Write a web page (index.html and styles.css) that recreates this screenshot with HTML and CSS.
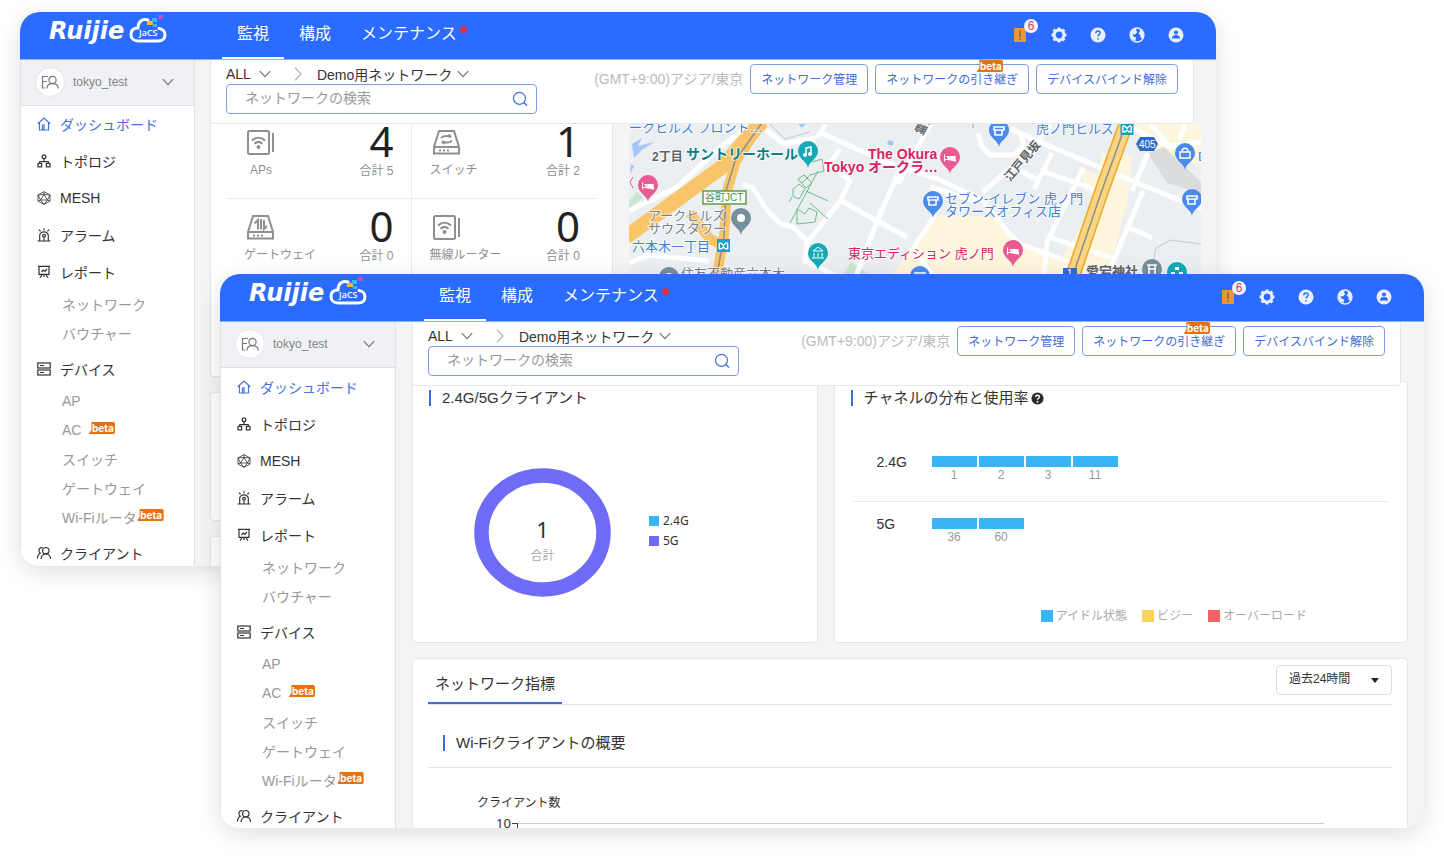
FILE: index.html
```html
<!DOCTYPE html>
<html lang="ja">
<head>
<meta charset="utf-8">
<meta name="viewport" content="width=device-width, initial-scale=1">
<title>Ruijie JaCS</title>
<link rel="stylesheet" href="styles.css">
</head>
<body>

<svg class="defs" aria-hidden="true">
  <symbol id="logo" viewBox="0 0 122 36" overflow="visible">
    <text class="logo-word" x="0" y="27">Ruijie</text>
    <path d="M99 8c-6-2-10 2-10 8-5 0-7 3-7 6.500 0 4 3 6.500 7 6.500h20c5 0 7-3 7-6s-2-6-6-6.500" fill="none" stroke="#fff" stroke-width="3" stroke-linecap="round"/>
    <path fill="#f3b73b" d="M98 9h6v4h-6z"/>
    <path fill="#35b9f1" d="M103 6h5v4h-5zM104 12h4v3h-4z"/>
    <path fill="#b552c8" d="M109 3h5v4h-5z"/>
    <text class="logo-tag" x="90" y="24">JaCS</text>
  </symbol>
  <symbol id="i-alert" viewBox="0 0 16 16">
    <path fill="#e8963c" d="M2 1h12v14H2z"/><path fill="#8d5b2a" d="M7.400 3.500h1.400v6.500H7.400zM7.400 11.300h1.400v1.400H7.400z"/>
  </symbol>
  <symbol id="i-gear" viewBox="0 0 16 16">
    <g fill="none" stroke="#e9f0ff"><circle cx="8" cy="8" r="4.900" stroke-width="3"/><path d="M8 .6v3M8 12.400v3M.6 8h3M12.400 8h3M2.600 2.600l2.200 2.200M11.200 11.200l2.200 2.200M13.400 2.600l-2.200 2.200M4.800 11.200l-2.200 2.200" stroke-width="3"/></g>
  </symbol>
  <symbol id="i-help" viewBox="0 0 16 16">
    <circle cx="8" cy="8" r="7.500" fill="#e9f0ff"/>
    <path d="M5.800 6.300c0-1.500 1-2.300 2.200-2.300s2.200.8 2.200 2c0 1.600-2.200 1.700-2.200 3.600" fill="none" stroke="#2c6bff" stroke-width="1.400"/><circle cx="8" cy="11.800" r=".9" fill="#2c6bff"/>
  </symbol>
  <symbol id="i-globe" viewBox="0 0 16 16">
    <circle cx="8" cy="8" r="7" fill="none" stroke="#e9f0ff" stroke-width="1.300"/>
    <path fill="#e9f0ff" d="M1.500 5 5 2l3-.8L7 3.500 8.300 5 6 7.500 3.500 7l1 2.500L7 10.500 6.500 14 3 12.500 1.200 9zM10.500 2l3 2 1.500 4-1.500 4-2-1.500L11.500 8 9.500 6.500 11 4.500z"/>
  </symbol>
  <symbol id="i-user" viewBox="0 0 16 16">
    <circle cx="8" cy="8" r="7.500" fill="#e9f0ff"/><circle cx="8" cy="5.600" r="2" fill="#2c6bff"/><path fill="#2c6bff" d="M4 11.500c0-2.500 1.500-3.500 4-3.500s4 1 4 3.500z"/>
  </symbol>
  <symbol id="i-chevron" viewBox="0 0 12 8">
    <path d="M.8 1.200 6 6.700l5.200-5.500" fill="none" stroke="currentColor" stroke-width="1.200"/>
  </symbol>
  <symbol id="i-sep" viewBox="0 0 8 14">
    <path d="M1 .8 7 7l-6 6.200" fill="none" stroke="currentColor" stroke-width="1.300"/>
  </symbol>
  <symbol id="i-search" viewBox="0 0 16 16">
    <circle cx="7.500" cy="7.300" r="6" fill="none" stroke="currentColor" stroke-width="1.200"/><path d="m12 11.500 3 3" stroke="currentColor" stroke-width="1.500"/>
  </symbol>
  <symbol id="i-avatar" viewBox="0 0 18 14">
    <g fill="none" stroke="#777" stroke-width="1.200"><path d="M7 1.500H1.500V13H4M1.500 6.500H6"/><circle cx="11.500" cy="5" r="3.600"/><path d="M6 13.500c0-3 2-4.800 5.500-4.800s5.700 1.800 5.700 4.800"/></g>
  </symbol>
  <symbol id="i-home" viewBox="0 0 14 14">
    <path d="M2.500 6v7h9V6M.8 6.800 7 1l6.200 5.800M5.500 13V7.500M7 13V7" fill="none" stroke="currentColor" stroke-width="1.200"/>
  </symbol>
  <symbol id="i-topology" viewBox="0 0 14 14">
    <g fill="none" stroke="currentColor" stroke-width="1.200"><circle cx="7" cy="2.800" r="1.900"/><path d="M7 4.700v3M2.700 9.500V7.700h8.600v1.800"/><rect x="1" y="9.500" width="3.600" height="3.400"/><rect x="9.400" y="9.500" width="3.600" height="3.400"/></g>
  </symbol>
  <symbol id="i-mesh" viewBox="0 0 14 14">
    <g fill="none" stroke="currentColor" stroke-width=".8"><path d="m7 .7 6 3.200v6.200l-6 3.200-6-3.200V3.900z"/><path d="m7 3.500 3.500 5.500h-7zM7 .7v2.800M1 3.900l2.500 5.100M13 3.900 10.500 9M1 10.100 3.500 9M13 10.100 10.500 9M7 13.300 3.500 9M7 13.300 10.500 9M1 3.900l6-.4 6 .4"/></g>
  </symbol>
  <symbol id="i-alarm" viewBox="0 0 14 14">
    <g fill="none" stroke="currentColor" stroke-width="1.200"><path d="M.5 13h13M2.700 13V7.500a4.300 3.600 0 0 1 8.600 0V13M7 .3v2M2 1.800l1.600 1.400M12 1.800l-1.600 1.400M7 13V9.500"/><circle cx="7" cy="7.800" r="1.400"/></g>
  </symbol>
  <symbol id="i-report" viewBox="0 0 14 14">
    <g fill="none" stroke="currentColor" stroke-width="1.200"><path d="M1 1.300h12M2 1.300v8h10v-8M4.500 7 6.300 5l1.500 1.300L10 4M5 9.500l-1.800 3.300M9 9.500l1.800 3.300M7 9.500V12"/></g>
  </symbol>
  <symbol id="i-device" viewBox="0 0 14 14">
    <g fill="none" stroke="currentColor" stroke-width="1.200"><rect x=".8" y="1" width="12.400" height="5"/><rect x=".8" y="8" width="12.400" height="5"/><path d="M3 3.500h4M3 10.500h4"/></g>
  </symbol>
  <symbol id="i-client" viewBox="0 0 14 14">
    <g fill="none" stroke="currentColor" stroke-width="1.200"><circle cx="8.800" cy="4.700" r="3.200"/><path d="M4 13c.3-3.300 2-5 4.800-5s4.500 1.700 4.800 5M5.500 1.700C3 1.200 1.700 3 2 5c.2 1 .7 1.700 1.300 2.200C1.500 8 .6 10 .4 12.500"/></g>
  </symbol>
  <symbol id="i-ap" viewBox="0 0 28 28">
    <g fill="none" stroke="#8f8f8f" stroke-width="2"><rect x="1" y="2" width="21" height="23" rx="1.500"/><path d="M26 4v19"/><path d="M5 11.500c4-3.800 9-3.800 13 0M7.500 14.800c2.500-2.400 5.500-2.400 8 0"/></g><circle cx="11.500" cy="18" r="2" fill="#8f8f8f"/>
  </symbol>
  <symbol id="i-switch" viewBox="0 0 28 28">
    <g fill="none" stroke="#8f8f8f" stroke-width="2"><path d="M6 2h15l5 16v6.500H1V18zM1 18h25"/><path d="M8 9c2-2.500 6-2.500 10-1l-2.500-2.500M19 11.500c-2 2.500-6 2.500-10 1l2.500 2.500"/></g><path d="M6 21.500h10" stroke="#8f8f8f" stroke-width="2" stroke-dasharray="2 2"/>
  </symbol>
  <symbol id="i-gateway" viewBox="0 0 28 28">
    <g fill="none" stroke="#8f8f8f" stroke-width="2"><path d="M6 2h15l5 16v6.500H1V18zM1 18h25"/><path d="M7.500 9.500 11 6v9.500M14 5v10.500M17 6v9l3-3"/></g><path d="M6 21.500h10" stroke="#8f8f8f" stroke-width="2" stroke-dasharray="2 2"/>
  </symbol>
  <symbol id="pin" viewBox="-10 -10 20 28" overflow="visible">
    <path d="M0 17C-1 10-10 8-10 0A10 10 0 1 1 10 0C10 8 1 10 0 17z" fill="currentColor"/>
  </symbol>
  <symbol id="g-shop" viewBox="-6 -6 12 12"><path d="M-5-4H5V-1H-5zM-4-1V4H3V-1" fill="none" stroke="#fff" stroke-width="1.600"/></symbol>
  <symbol id="g-bed" viewBox="-6 -6 12 12"><path d="M-5.500-3.500v7M-5.500 1.500h11v2M-3.500-1.500h2V1.500M0-1.500h5V1.500H0z" fill="#fff" stroke="#fff" stroke-width="1.200"/></symbol>
  <symbol id="metro" viewBox="0 0 14 14"><path fill="#17a2c8" d="M0 0h14v14H0z"/><path d="M2.500 10.500V5.500C2.500 3 5.500 4.500 7 7c1.500-2.500 4.500-4 4.500-1.500v5H9L7 8.500 5 10.500z" fill="none" stroke="#fff" stroke-width="1.500"/></symbol>
</svg>

<main class="stage">

  <section class="window window-back" aria-label="ネットワーク監視">
    <header class="topbar">
      <svg class="logo" role="img" aria-label="Ruijie JaCS"><use href="#logo"/></svg>
      <nav class="tabs">
        <a class="tab is-active" href="#">監視</a>
        <a class="tab" href="#">構成</a>
        <a class="tab has-dot" href="#">メンテナンス</a>
      </nav>
      <div class="tools">
        <button class="tool" aria-label="アラート"><svg><use href="#i-alert"/></svg><span class="count">6</span></button>
        <button class="tool" aria-label="設定"><svg><use href="#i-gear"/></svg></button>
        <button class="tool" aria-label="ヘルプ"><svg><use href="#i-help"/></svg></button>
        <button class="tool" aria-label="言語"><svg><use href="#i-globe"/></svg></button>
        <button class="tool" aria-label="ユーザー"><svg><use href="#i-user"/></svg></button>
      </div>
    </header>
    <div class="body">
      <aside class="sidebar">
        <button class="account"><span class="avatar"><svg><use href="#i-avatar"/></svg></span><span class="account-name">tokyo_test</span><svg class="chevron"><use href="#i-chevron"/></svg></button>
        <nav class="menu">
          <a class="item is-active" href="#"><svg><use href="#i-home"/></svg>ダッシュボード</a>
          <a class="item" href="#"><svg><use href="#i-topology"/></svg>トポロジ</a>
          <a class="item" href="#"><svg><use href="#i-mesh"/></svg>MESH</a>
          <a class="item" href="#"><svg><use href="#i-alarm"/></svg>アラーム</a>
          <a class="item" href="#"><svg><use href="#i-report"/></svg>レポート</a>
          <div class="submenu">
            <a href="#">ネットワーク</a>
            <a href="#">バウチャー</a>
          </div>
          <a class="item" href="#"><svg><use href="#i-device"/></svg>デバイス</a>
          <div class="submenu">
            <a href="#">AP</a>
            <a class="spaced" href="#">AC<span class="beta">beta</span></a>
            <a href="#">スイッチ</a>
            <a href="#">ゲートウェイ</a>
            <a href="#">Wi-Fiルータ<span class="beta">beta</span></a>
          </div>
          <a class="item" href="#"><svg><use href="#i-client"/></svg>クライアント</a>
        </nav>
      </aside>
      <div class="content">
        <div class="subheader">
          <div class="finder">
            <div class="crumbs">
              <button class="crumb">ALL<svg class="chevron"><use href="#i-chevron"/></svg></button>
              <svg class="sep"><use href="#i-sep"/></svg>
              <button class="crumb crumb-long">Demo用ネットワーク<svg class="chevron"><use href="#i-chevron"/></svg></button>
            </div>
            <label class="search"><input type="text" placeholder="ネットワークの検索" aria-label="ネットワークの検索"><svg><use href="#i-search"/></svg></label>
          </div>
          <div class="actions">
            <span class="zone">(GMT+9:00)アジア/東京</span>
            <button class="btn">ネットワーク管理</button>
            <button class="btn">ネットワークの引き継ぎ<span class="beta">beta</span></button>
            <button class="btn">デバイスバインド解除</button>
          </div>
        </div>
        <div class="overview">
          <div class="stats">
            <div class="stat"><div class="kind"><svg><use href="#i-ap"/></svg><span class="center">APs</span></div><div class="value"><strong>4</strong><span>合計 5</span></div></div>
            <div class="stat"><div class="kind"><svg><use href="#i-switch"/></svg><span>スイッチ</span></div><div class="value"><strong>1</strong><span>合計 2</span></div></div>
            <div class="stat"><div class="kind"><svg><use href="#i-gateway"/></svg><span>ゲートウェイ</span></div><div class="value"><strong>0</strong><span>合計 0</span></div></div>
            <div class="stat"><div class="kind"><svg><use href="#i-ap"/></svg><span>無線ルーター</span></div><div class="value"><strong>0</strong><span>合計 0</span></div></div>
          </div>
          <svg class="map" viewBox="629 123 572 253" preserveAspectRatio="xMidYMin slice" role="img" aria-label="地図">
            <path fill="#eceff1" d="M629 123h572v253H629z"/>
            <path fill="#fef6dc" d="M935 214l60 2 28 32 40 8 25-42 14-62 30 2-4 44-26 98H905l-14-20zM1130 123h71v40l-40-4-18-20zM1083 168l22 8-8 20-14-8z"/>
            <path fill="#dadcde" d="M1148 152l16-6 37 35v11l-34-10z"/>
            <path fill="#c9e7cf" d="M629 200l8-9 6 6-14 10zM843 275l8-14 20 14z"/>
            <path fill="#a5c5f7" d="M632 143l10-6-4 8 16-4-12 8-8 8zM798 123h8l-4 4zM889 139l5 2-2 4-5-2zM631 163l3 2-4 8z"/>
            <g class="road">
              <path d="M629 210l48-24 44-40 30-23M743 183l10 4 14 22 14 14 12 3 14 14-2 20 38 18M766 129l18 14 32-6M817 137l9-14M820 131l60 28 60 20 42 20 26 32 12 12 55 20M826 160l24 20-10 20-33 42M840 199l37 21 30 16M900 168l-22 50-22 57M840 148l-14 20M930 123l-32 60M978 132l4 14 8 8h24l10-10-4-12M1011 128l50 22 52 22 88 36M1050 123l-17 24-50 44M1052 152l-18 36M1042 170l58 20M1083 167l-36 74-3 34M1143 190l-32 76M1130 227l22 10M1052 237l60 20M1148 152l-16 38M935 214l-22 34 20 27M975 200l-44-14M1020 170l16 8M1150 123l20 22 31-4M1185 123l-6 16M1130 126l40 20M629 262l20-8 60 6"/>
            </g>
            <g class="expressway">
              <path d="M626 236l96-70 40-46"/>
              <path class="thin" d="M764 118l-28 42-9 30-3 45-8 44"/>
              <path class="thin" d="M690 212l20 26 12 6"/>
            </g>
            <path d="M761 123l-26 37-9 30-2 45-8 44" fill="none" stroke="#8d8d8d" stroke-width="1.500"/>
            <path d="M1127 120l-26 72-30 88" fill="none" stroke="#e9aa27" stroke-width="15"/>
            <path d="M1127 120l-26 72-30 88" fill="none" stroke="#fbd581" stroke-width="12"/>
            <path d="M1127 120l-26 72-30 88" fill="none" stroke="#8d8d8d" stroke-width="1.500"/>
            <g fill="none" stroke="#6dbd85" stroke-width="1"><path d="M812 161l10-3 2 12-14 4-8 8M798 178l6-4 8 8-6 5zM793 188l6-5 6 5-6 10-6-3zM818 170l-28 52M797 208l8 5 4-6 8 4-2 10-18 2zM810 202l18 16M792 196l-3 5M806 190l22 10M973 123v4"/></g>
            <g fill="none" stroke="#c4c9cd"><path d="M770 123l15 15 25-7M1150 275l6-28 14-8 31 4"/></g>
            <g class="lbl blue"><text x="629" y="131">ークヒルズ フロント…</text><text x="632" y="250">六本木一丁目</text><text x="945" y="202">セブン-イレブン 虎ノ門</text><text x="945" y="215">タワーズオフィス店</text><text x="1036" y="132">虎ノ門ヒルズ</text><text x="1198" y="160">D</text></g>
            <g class="lbl slate"><text x="648" y="219">アークヒルズ</text><text x="648" y="232">サウスタワー</text><text x="681" y="277">住友不動産六本木</text></g>
            <g class="lbl strong"><text class="teal" x="686" y="158">サントリーホール</text><text class="rose" x="868" y="158">The Okura</text><text class="rose" x="824" y="171">Tokyo オークラ…</text></g>
            <g class="lbl"><text class="rose" x="848" y="257">東京エディション 虎ノ門</text><text class="stone bold" x="1086" y="275">愛宕神社</text></g>
            <g class="lbl small stone"><text class="bold" x="652" y="160">2丁目</text><text class="bold" transform="translate(1010 181) rotate(-50)">江戸見坂</text><text class="bold" transform="translate(922 135) rotate(-60)">霊南坂</text></g>
            <rect x="703" y="190" width="43" height="13" fill="#fff" stroke="#5f9e46" stroke-width="1.500"/>
            <g class="lbl tiny"><text class="green" x="705" y="200">谷町JCT</text></g>
            <path fill="#2f6dc9" d="M1140 136h14l4 7-4 7h-14l-4-7zM1063 267h14v9h-14z"/>
            <g class="lbl tiny"><text class="white" x="1139" y="147">405</text><text class="white" x="1067" y="276">1</text></g>
            <use href="#metro" x="717" y="238" width="13" height="13"/><use href="#metro" x="1120" y="121" width="14" height="13"/>
            <g color="#ea5b93"><use href="#pin" x="638" y="174" width="20" height="28"/><use href="#pin" x="940" y="146" width="20" height="28"/><use href="#pin" x="1003" y="239" width="20" height="28"/></g>
            <g color="#4b8bf0"><use href="#pin" x="989" y="119" width="20" height="28"/><use href="#pin" x="923" y="190" width="20" height="28"/><use href="#pin" x="1175" y="142" width="20" height="28"/><use href="#pin" x="1182" y="188" width="20" height="28"/><use href="#pin" x="910" y="265" width="20" height="28"/></g>
            <g color="#16a9b5"><use href="#pin" x="798" y="140" width="20" height="28"/><use href="#pin" x="808" y="242" width="20" height="28"/><use href="#pin" x="1167" y="261" width="20" height="28"/></g>
            <g color="#78909c"><use href="#pin" x="731" y="207" width="20" height="28"/><use href="#pin" x="659" y="266" width="20" height="28"/><use href="#pin" x="1142" y="258" width="20" height="28"/></g>
            <use href="#g-bed" x="642" y="179" width="12" height="12"/><use href="#g-bed" x="944" y="151" width="12" height="12"/><use href="#g-bed" x="1007" y="244" width="12" height="12"/>
            <use href="#g-shop" x="993" y="124" width="12" height="12"/><use href="#g-shop" x="927" y="194" width="12" height="12"/><use href="#g-shop" x="1186" y="193" width="12" height="12"/><use href="#g-shop" x="914" y="270" width="12" height="12"/>
            <circle cx="741" cy="217" r="4" fill="#fff"/><circle cx="669" cy="276" r="4" fill="#fff"/>
            <path d="M806 154v-7l5-1v7" fill="none" stroke="#fff" stroke-width="1.500"/><circle cx="805" cy="154" r="2" fill="#fff"/><circle cx="810" cy="153" r="2" fill="#fff"/>
            <path d="M813 250l5-4 5 4zM814 252v4M818 252v4M822 252v4M812 257h12" fill="none" stroke="#fff"/>
            <path d="M1180 151h10v6h-10zM1182 151c0-5 6-5 6 0" fill="none" stroke="#fff" stroke-width="1.500"/>
            <path d="M1147 264h10M1148 268h8M1149 264v9M1155 264v9" stroke="#fff" stroke-width="1.500"/>
            <path d="M1175 266h4v3h-4zM1171 271h4v3h-4zM1179 271h4v3h-4z" fill="#fff"/>
            <path d="M633 176l-3 5 3 6" fill="none" stroke="#ea5b93"/>
          </svg>
        </div>
        <div class="card blank"></div>
        <div class="card blank"></div>
      </div>
    </div>
  </section>

  <section class="window window-front" aria-label="クライアント概要">
    <header class="topbar">
      <svg class="logo" role="img" aria-label="Ruijie JaCS"><use href="#logo"/></svg>
      <nav class="tabs">
        <a class="tab is-active" href="#">監視</a>
        <a class="tab" href="#">構成</a>
        <a class="tab has-dot" href="#">メンテナンス</a>
      </nav>
      <div class="tools">
        <button class="tool" aria-label="アラート"><svg><use href="#i-alert"/></svg><span class="count">6</span></button>
        <button class="tool" aria-label="設定"><svg><use href="#i-gear"/></svg></button>
        <button class="tool" aria-label="ヘルプ"><svg><use href="#i-help"/></svg></button>
        <button class="tool" aria-label="言語"><svg><use href="#i-globe"/></svg></button>
        <button class="tool" aria-label="ユーザー"><svg><use href="#i-user"/></svg></button>
      </div>
    </header>
    <div class="body">
      <aside class="sidebar">
        <button class="account"><span class="avatar"><svg><use href="#i-avatar"/></svg></span><span class="account-name">tokyo_test</span><svg class="chevron"><use href="#i-chevron"/></svg></button>
        <nav class="menu">
          <a class="item is-active" href="#"><svg><use href="#i-home"/></svg>ダッシュボード</a>
          <a class="item" href="#"><svg><use href="#i-topology"/></svg>トポロジ</a>
          <a class="item" href="#"><svg><use href="#i-mesh"/></svg>MESH</a>
          <a class="item" href="#"><svg><use href="#i-alarm"/></svg>アラーム</a>
          <a class="item" href="#"><svg><use href="#i-report"/></svg>レポート</a>
          <div class="submenu">
            <a href="#">ネットワーク</a>
            <a href="#">バウチャー</a>
          </div>
          <a class="item" href="#"><svg><use href="#i-device"/></svg>デバイス</a>
          <div class="submenu">
            <a href="#">AP</a>
            <a class="spaced" href="#">AC<span class="beta">beta</span></a>
            <a href="#">スイッチ</a>
            <a href="#">ゲートウェイ</a>
            <a href="#">Wi-Fiルータ<span class="beta">beta</span></a>
          </div>
          <a class="item" href="#"><svg><use href="#i-client"/></svg>クライアント</a>
        </nav>
      </aside>
      <div class="content">
        <div class="subheader">
          <div class="finder">
            <div class="crumbs">
              <button class="crumb">ALL<svg class="chevron"><use href="#i-chevron"/></svg></button>
              <svg class="sep"><use href="#i-sep"/></svg>
              <button class="crumb crumb-long">Demo用ネットワーク<svg class="chevron"><use href="#i-chevron"/></svg></button>
            </div>
            <label class="search"><input type="text" placeholder="ネットワークの検索" aria-label="ネットワークの検索"><svg><use href="#i-search"/></svg></label>
          </div>
          <div class="actions">
            <span class="zone">(GMT+9:00)アジア/東京</span>
            <button class="btn">ネットワーク管理</button>
            <button class="btn">ネットワークの引き継ぎ<span class="beta">beta</span></button>
            <button class="btn">デバイスバインド解除</button>
          </div>
        </div>
        <div class="panels">
          <section class="card clients">
            <h2 class="title">2.4G/5Gクライアント</h2>
            <div class="clients-chart">
              <div class="donut">
                <svg viewBox="0 0 137 129"><ellipse cx="68.500" cy="64.500" rx="61" ry="57" fill="none" stroke="#6e6cf7" stroke-width="14.500"/></svg>
                <div class="donut-text"><strong>1</strong><span>合計</span></div>
              </div>
              <ul class="bands">
                <li><i class="swatch sky"></i>2.4G</li>
                <li><i class="swatch violet"></i>5G</li>
              </ul>
            </div>
          </section>
          <section class="card channels">
            <h2 class="title">チャネルの分布と使用率<svg class="hint" viewBox="0 0 14 14"><circle cx="7" cy="7" r="6.500" fill="#2b2b2b"/><path d="M5 5.500C5 2.800 9 2.800 9 5.300 9 6.800 7 6.800 7 8.400" fill="none" stroke="#fff" stroke-width="1.500"/><circle cx="7" cy="10.500" r="1" fill="#fff"/></svg></h2>
            <div class="channel-rows">
              <div class="channel-row"><span class="channel-name">2.4G</span><div class="bars"><span>1</span><span>2</span><span>3</span><span>11</span></div></div>
              <div class="channel-row"><span class="channel-name">5G</span><div class="bars"><span>36</span><span>60</span></div></div>
            </div>
            <ul class="loads">
              <li><i class="swatch sky"></i>アイドル状態</li>
              <li><i class="swatch amber"></i>ビジー</li>
              <li><i class="swatch red"></i>オーバーロード</li>
            </ul>
          </section>
        </div>
        <section class="card metrics">
          <div class="metrics-head">
            <a class="metrics-tab" href="#">ネットワーク指標</a>
            <span class="period"><select aria-label="期間"><option>過去24時間</option></select></span>
          </div>
          <h3 class="title metrics-title">Wi-Fiクライアントの概要</h3>
          <div class="plot">
            <span class="plot-name">クライアント数</span>
            <div class="plot-area"><span class="tick">10</span><span class="axis"></span></div>
          </div>
        </section>
      </div>
    </div>
  </section>

</main>
</body>
</html>
```
FILE: styles.css
```css
* { box-sizing: border-box; }

body {
  margin: 0;
  background: #fff;
  color: #333;
  font-family: "Liberation Sans", "Noto Sans CJK JP", sans-serif;
  font-size: 14px;
}

a { color: inherit; text-decoration: none; }
button, input, select { margin: 0; padding: 0; border: 0; background: none; color: inherit; font: inherit; }
button { cursor: pointer; }
ul { margin: 0; padding: 0; list-style: none; }
svg { display: block; flex: none; }
.defs { position: absolute; width: 0; height: 0; }

/* Overlapping windows on a free canvas */
.stage { position: relative; min-height: 100vh; overflow: hidden; }
.window {
  position: absolute;
  display: flex;
  flex-direction: column;
  overflow: hidden;
  border-radius: 20px;
  background: #f4f4f4;
  box-shadow: 0 6px 24px rgba(0, 0, 0, .13);
}
.window-back { inset: 12px 228px 290px 20px; }
.window-front { inset: 274px 20px 28px 220px; }

/* Top bar */
.topbar {
  display: flex;
  flex: none;
  height: 48px;
  padding: 0 32px 0 29px;
  border-bottom: 1px solid #8db0fb;
  background: #2c6bff;
  color: #fff;
}
.logo { width: 122px; height: 36px; margin-right: 51px; overflow: visible; }
.window-front .logo { margin-right: 53px; }
.logo-word { fill: #fff; font: italic 700 24px "DejaVu Sans", sans-serif; }
.logo-tag { fill: #fff; font: 600 9px "Open Sans", sans-serif; }
.tabs { display: flex; flex: 1; }
.tab {
  position: relative;
  padding: 0 15px;
  border-bottom: 2px solid transparent;
  font-size: 16px;
  line-height: 44px;
  white-space: nowrap;
}
.tab.is-active { border-color: #fff; }
.has-dot::after {
  content: "";
  position: absolute;
  top: 14px;
  right: 5px;
  width: 7px;
  height: 7px;
  border-radius: 50%;
  background: #dc2f45;
}
.tools { display: flex; align-items: center; gap: 23px; padding-bottom: 2px; }
.tool { position: relative; }
.tool svg { width: 16px; height: 16px; }
.count {
  position: absolute;
  top: -8px;
  right: -10px;
  width: 14px;
  border-radius: 50%;
  background: #f5f6fd;
  color: #d3405c;
  font-size: 12px;
  line-height: 14px;
  text-align: center;
}

/* Sidebar */
.body { display: flex; flex: 1; min-height: 0; }
.sidebar { flex: none; width: 175px; border: solid #e2e2e2; border-width: 0 1px; background: #fff; }
.window-front .sidebar { width: 176px; }
.account {
  display: flex;
  align-items: center;
  width: 100%;
  height: 46px;
  padding: 0 20px 2px 14px;
  border-bottom: 1px solid #dedfe2;
  background: #f0f1f4;
  color: #858585;
  font-size: 12px;
}
.avatar { display: grid; place-items: center; width: 30px; height: 30px; margin-right: 8px; border: 1px solid #e6e6e6; border-radius: 50%; background: #fff; }
.avatar svg { width: 18px; height: 14px; }
.account-name { flex: 1; text-align: left; }
.chevron { width: 12px; height: 8px; color: #777; }
.window-front .menu { padding-top: 1px; }
.item { display: flex; align-items: center; gap: 9px; height: 37px; padding: 0 0 2px 16px; white-space: nowrap; }
.item svg { width: 14px; height: 14px; }
.item.is-active { color: #4672dc; }
.submenu { padding: 0 0 2px 41px; color: #999; }
.submenu a { display: flex; align-items: center; height: 29px; padding-bottom: 3px; white-space: nowrap; }
.submenu .beta { align-self: flex-start; margin-top: 5px; }
.spaced .beta { margin-left: 7px; }
.beta {
  width: 27px;
  padding-left: 2px;
  border-radius: 2px;
  background: #e6710d;
  clip-path: polygon(3px 0, 100% 0, 100% 100%, 0 100%, 3px 8px);
  color: #fff;
  font: 700 10px/12px Inter, sans-serif;
  text-align: center;
}

/* Content column */
.content { flex: 1; min-width: 0; padding-left: 15px; }
.window-front .content { padding-left: 16px; }
.subheader {
  position: relative;
  z-index: 1;
  display: flex;
  justify-content: space-between;
  margin-right: 22px;
  padding: 4px 15px 9px;
  border: solid #e6e6e6;
  border-width: 0 1px 1px;
  border-radius: 0 0 4px 4px;
  background: #fff;
}
.window-front .subheader { margin-right: 23px; }
.finder { flex: 0 1 311px; }
.crumbs { display: flex; align-items: center; height: 20px; white-space: nowrap; }
.crumb { display: flex; align-items: center; gap: 8px; }
.crumb-long { gap: 5px; }
.sep { width: 8px; height: 14px; margin: 0 15px 0 23px; color: #b5b5b5; }
.search { display: flex; align-items: center; height: 30px; padding: 0 8px 0 18px; border: 1px solid #7d9fe0; border-radius: 4px; }
.search input { flex: 1; min-width: 0; padding-bottom: 2px; outline: 0; }
.search input::placeholder { color: #999; }
.search svg { width: 16px; height: 16px; color: #4672dc; }
.actions { display: flex; align-items: center; align-self: flex-start; gap: 7px; }
.zone { padding-bottom: 3px; color: #bbb; white-space: nowrap; }
.btn {
  position: relative;
  height: 30px;
  padding: 0 10px 2px;
  border: 1px solid #7d9fe0;
  border-radius: 4px;
  color: #3f6cd6;
  font-size: 12px;
  white-space: nowrap;
}
.btn .beta { position: absolute; top: -5px; right: 25px; }
.card { border: 1px solid #e6e6e6; border-radius: 4px; background: #fff; }

/* Device counts and map */
.overview { display: grid; grid-template-columns: 403px 1fr; gap: 16px; height: 253px; padding-right: 15px; }
.stats {
  display: grid;
  grid-template-columns: 1fr 1fr;
  grid-template-rows: 75px 84px;
  padding: 0 15px;
  border: solid #e6e6e6;
  border-width: 0 1px 1px;
  border-radius: 0 0 4px 4px;
  background: #fff;
}
.stat { display: flex; align-items: flex-end; justify-content: space-between; padding: 0 17px 18px 18px; border-bottom: 1px solid #ececec; }
.stat:nth-child(odd) { border-right: 1px solid #ececec; }
.stat:nth-child(n + 3) { border-bottom: 0; }
.kind { display: grid; color: #8f8f8f; font-size: 12px; line-height: 20px; }
.kind svg { width: 28px; height: 28px; margin: 0 0 3px 3px; }
.kind .center { padding-left: 6px; }
.value { display: grid; justify-items: end; color: #8f8f8f; font-size: 12px; line-height: 18px; }
.value strong { color: #222; font: 400 42px/42px "Noto Sans", sans-serif; }
.map { width: 100%; height: 100%; }
.road { fill: none; stroke: #fff; stroke-width: 5; stroke-linejoin: round; }
.expressway { fill: none; stroke: #fac469; stroke-width: 15; stroke-linejoin: round; }
.expressway .thin { stroke-width: 10; }
.lbl { font-size: 13px; paint-order: stroke; stroke: #fff; stroke-width: 2px; stroke-opacity: .7; }
.lbl.small { font-size: 12px; }
.lbl.tiny { font-size: 10px; stroke: none; }
.lbl.strong { font-size: 14px; font-weight: 700; }
.bold { font-weight: 700; }
.blue { fill: #3f7fd6; }
.slate { fill: #74838f; }
.stone { fill: #5c6266; }
.teal { fill: #0a7f86; }
.rose { fill: #d62466; }
.green { fill: #4f9138; }
.white { fill: #fff; }
.blank { height: 129px; margin: 15px 15px 0 0; }

/* Client and channel panels */
.panels { display: grid; grid-template-columns: 406fr 575fr; gap: 16px; margin: -5px 16px 15px 0; }
.panels .card { padding: 8px 15px 0 16px; }
.title { display: flex; align-items: center; gap: 3px; margin: 0; color: #333; font-size: 15px; font-weight: 400; line-height: 16px; white-space: nowrap; }
.title::before { content: ""; width: 2px; height: 16px; margin-right: 8px; background: #3b6cd9; }
.hint { width: 13px; height: 13px; }
.clients-chart { display: flex; align-items: center; gap: 38px; padding: 62px 0 45px 45px; }
.donut { display: grid; place-items: center; }
.donut > * { grid-area: 1 / 1; }
.donut svg { width: 137px; height: 129px; }
.donut-text { display: grid; gap: 2px; justify-items: center; padding-top: 14px; color: #aaa; font-size: 12px; line-height: 20px; }
.donut-text strong { color: #333; font: 400 22px/30px "Noto Sans", sans-serif; }
.bands { display: grid; padding-bottom: 4px; font: 12px/20px "Noto Sans", sans-serif; }
.bands li { display: flex; align-items: center; gap: 4px; }
.swatch { width: 12px; height: 12px; }
.bands .swatch { width: 10px; height: 10px; }
.sky { background: #38b5f5; }
.violet { background: #6e6cf7; }
.amber { background: #fbd25c; }
.red { background: #f36363; }
.channel-rows { padding: 40px 4px 0 3px; }
.channel-row { display: flex; gap: 8px; height: 62px; padding: 8px 0 0 23px; }
.channel-row:first-child { height: 56px; margin-bottom: 6px; border-bottom: 1px solid #e8e8e8; }
.channel-name { width: 47px; line-height: 16px; }
.bars { display: flex; gap: 2px; padding-top: 2px; color: #999; font-size: 12px; line-height: 16px; text-align: center; }
.bars span { width: 45px; }
.bars span::before { content: ""; display: block; height: 11px; background: #38b5f5; }
.loads { display: flex; justify-content: flex-end; gap: 15px; padding: 38px 85px 0 0; color: #aaa; font-size: 12px; line-height: 16px; white-space: nowrap; }
.loads li { display: flex; align-items: center; gap: 3px; }

/* Metrics */
.metrics { height: 240px; margin-right: 16px; padding: 6px 15px; }
.metrics-head { display: flex; justify-content: space-between; height: 40px; border-bottom: 1px solid #e4e4e4; }
.metrics-tab { padding: 0 7px; border-bottom: 2px solid #3b6cd9; font-size: 15px; line-height: 38px; }
.period { position: relative; height: 30px; }
.period select { width: 116px; height: 30px; padding: 0 0 2px 12px; border: 1px solid #ddd; border-radius: 4px; appearance: none; font-size: 12px; }
.period::after { content: ""; position: absolute; top: 13px; right: 13px; border: solid transparent; border-width: 5px 4px 0; border-top-color: #222; pointer-events: none; }
.metrics-title { height: 63px; padding: 14px 15px 0; border-bottom: 1px solid #e4e4e4; }
.plot { padding: 25px 68px 0 49px; font-size: 12px; line-height: 20px; }
.plot-area { display: flex; align-items: flex-start; gap: 1px; padding-left: 19px; }
.tick { font: 13px/20px "Noto Sans", sans-serif; }
.axis {
  flex: 1;
  height: 40px;
  margin-top: 10px;
  background:
    linear-gradient(#444, #444) 0 0 / 6px 1px no-repeat,
    linear-gradient(#444, #444) 5px 0 / 1px 100% no-repeat,
    linear-gradient(#ccc, #ccc) 0 0 / 100% 1px no-repeat;
}
```
